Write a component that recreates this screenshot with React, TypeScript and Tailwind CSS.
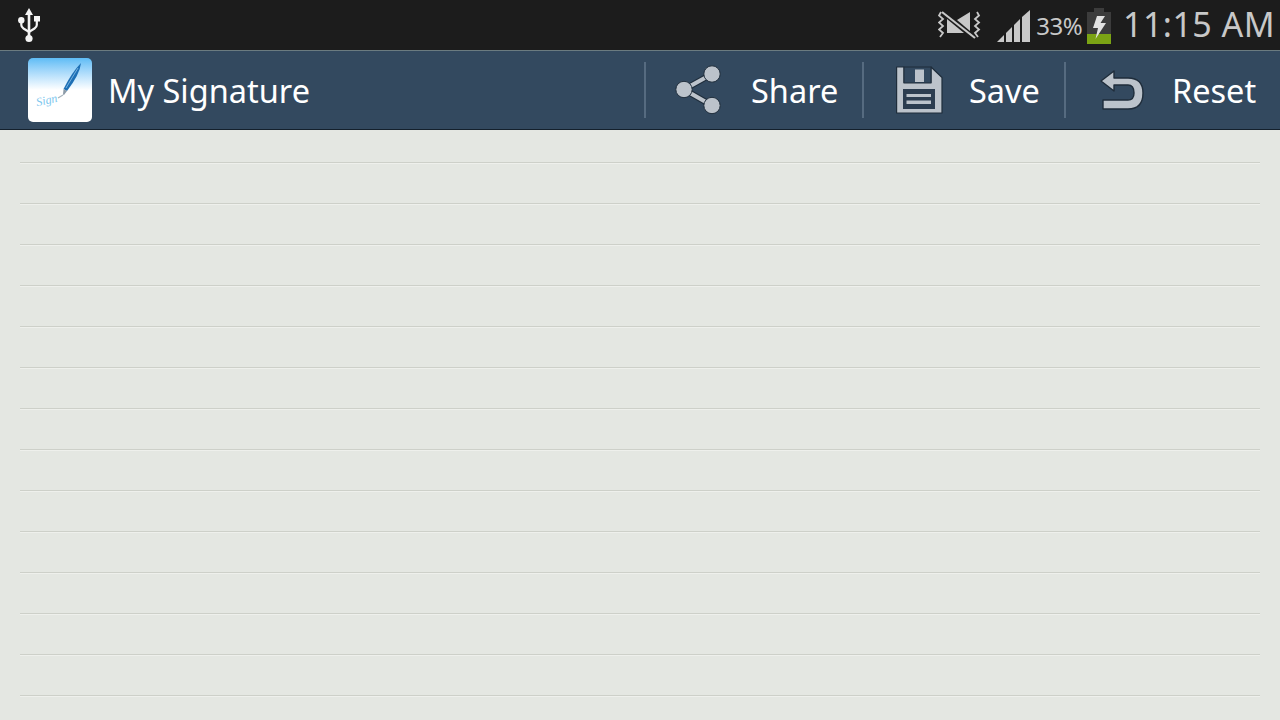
import React from "react";

const font = { fontFamily: '"Noto Sans", "Open Sans", sans-serif' };

function Usb() {
  return (
    <svg width="24" height="36" viewBox="0 0 24 36" className="block">
      <path d="M12 1 L16 8 H13.3 V32 H10.7 V8 H8 Z" fill="#f4f4f4" />
      <circle cx="12" cy="31.5" r="3.6" fill="#f4f4f4" />
      <circle cx="4.3" cy="13.2" r="3.2" fill="#f4f4f4" />
      <rect x="17" y="9" width="6" height="5.5" fill="#f4f4f4" />
      <path d="M4.3 14 V18 Q4.3 20 6.5 21.5 L12 25 L17.5 21.5 Q19.8 20 19.8 18 V13" fill="none" stroke="#f4f4f4" strokeWidth="2.2" />
    </svg>
  );
}

function NoSim() {
  return (
    <svg width="44" height="30" viewBox="0 0 44 30" className="block">
      <path d="M9 9 L26 23 H9 Z" fill="#c8c8c8" />
      <path d="M32 2 V21 L19 10 Z" fill="#c8c8c8" />
      <path d="M4 2 L37 28" stroke="#c8c8c8" strokeWidth="2.2" />
      <path d="M3 2 L1 5.5 L5 9 L1 12.5 L5 16 L1 19.5 L5 23 L2 27" fill="none" stroke="#c8c8c8" strokeWidth="1.8" />
      <path d="M39 2 L41 5.5 L37 9 L41 12.5 L37 16 L41 19.5 L37 23 L40 27" fill="none" stroke="#c8c8c8" strokeWidth="1.8" />
    </svg>
  );
}

function Signal() {
  return (
    <svg width="34" height="34" viewBox="0 0 34 34" className="block">
      <path d="M0 32 L7 25 V32 Z" fill="#c8c8c8" />
      <path d="M9 23 L15 17 V32 H9 Z" fill="#c8c8c8" />
      <path d="M17 15 L23 9 V32 H17 Z" fill="#c8c8c8" />
      <path d="M25 7 L33 0 V32 H25 Z" fill="#c8c8c8" />
    </svg>
  );
}

function Battery() {
  return (
    <svg width="24" height="36" viewBox="0 0 24 36" className="block">
      <rect x="7" y="0" width="10" height="4" fill="#3c3c3c" />
      <rect x="0" y="4" width="24" height="32" fill="#3c3c3c" />
      <rect x="0" y="26" width="24" height="10" fill="#7ba314" />
      <path d="M10 8 L6 20 H11 L8.5 31 L19 15 H13.5 L18 8 Z" fill="#e2e2e2" />
    </svg>
  );
}

function Logo() {
  return (
    <div className="relative w-[64px] h-[64px] rounded-[5px] overflow-hidden bg-gradient-to-b from-[#5dbcf5] via-[#ffffff] via-50% to-[#ffffff]">
      <svg width="64" height="64" viewBox="0 0 64 64" className="absolute inset-0">
        <path d="M53 5 Q52 16 39 33 L35.5 31 Q44 14 53 5 Z" fill="#1d6fb5" />
        <path d="M50 10 Q45 18 38 30" fill="none" stroke="#7fb8e2" strokeWidth="0.9" />
        <path d="M35.5 31 L39 33 L36 37 L35 36.5 Z" fill="#8c9ba8" />
        <path d="M30 40 L35 37" stroke="#a8b4bd" strokeWidth="1.2" />
      </svg>
      <span className="absolute left-[8px] top-[36px] text-[12px] leading-none italic text-[#7cc6ee] -rotate-12" style={{ fontFamily: '"Liberation Serif", serif' }}>Sign</span>
    </div>
  );
}

function Share() {
  return (
    <svg width="48" height="50" viewBox="0 0 48 50" className="block">
      <path d="M37 9 L9 24.5 L37 40.5" fill="none" stroke="#1f2d3b" strokeWidth="6.4" />
      <path d="M37 9 L9 24.5 L37 40.5" fill="none" stroke="#bcc3cb" strokeWidth="4.2" />
      <circle cx="37" cy="9" r="8.2" fill="#bcc3cb" stroke="#1f2d3b" strokeWidth="1" />
      <circle cx="9" cy="24.5" r="8.2" fill="#bcc3cb" stroke="#1f2d3b" strokeWidth="1" />
      <circle cx="37" cy="40.5" r="8.2" fill="#bcc3cb" stroke="#1f2d3b" strokeWidth="1" />
    </svg>
  );
}

function Save() {
  return (
    <svg width="48" height="48" viewBox="0 0 48 48" className="block">
      <path d="M0.6 1 H8 V16.5 H35 V1 L46 11.5 V47 H0.6 Z" fill="#bcc3cb" stroke="#1f2d3b" strokeWidth="1.2" strokeLinejoin="round" />
      <rect x="8" y="1" width="27" height="16" fill="#33495f" stroke="#1f2d3b" strokeWidth="1" />
      <rect x="19" y="3.5" width="9" height="12.5" fill="#bcc3cb" />
      <rect x="7" y="23" width="32" height="20" fill="#2c3d50" />
      <rect x="10.5" y="28" width="24.5" height="3" fill="#bcc3cb" />
      <rect x="10.5" y="34.5" width="24.5" height="3.5" fill="#bcc3cb" />
    </svg>
  );
}

function Reset() {
  return (
    <svg width="48" height="44" viewBox="0 0 48 44" className="block">
      <path d="M2 13 L15 3 V10 H29 Q44 10 44 25 Q44 41 29 41 H4 V32 H29 Q35 32 35 25 Q35 17 29 17 H15 V23 Z" fill="#bcc3cb" stroke="#1f2d3b" strokeWidth="1.4" strokeLinejoin="round" />
    </svg>
  );
}

function Divider() {
  return <div className="w-[2px] h-[56px] bg-[#566b80]" />;
}

export default function App() {
  const lines = Array.from({ length: 14 });
  return (
    <div className="w-[1280px] h-[720px] overflow-hidden flex flex-col bg-[#e4e7e2]" style={font}>
      <div className="h-[50px] shrink-0 bg-[#1c1c1c] flex items-center pl-[17px] pr-[5px]">
        <Usb />
        <div className="ml-auto flex items-center">
          <NoSim />
          <div className="ml-[15px] mt-[4px]"><Signal /></div>
          <span className="ml-[5px] mt-[2px] text-[24px] leading-none tracking-[-0.5px] text-[#c8c8c8]">33%</span>
          <div className="ml-[5px] mt-[1px]"><Battery /></div>
          <span className="ml-[12px] mb-[2px] text-[34px] leading-none tracking-[0.45px] text-[#c8c8c8]">11:15 AM</span>
        </div>
      </div>
      <div className="h-[80px] shrink-0 bg-[#33495f] border-t border-t-[#6b7b80] border-b border-b-[#14202c] flex items-center pl-[28px]">
        <Logo />
        <span className="ml-[16px] mt-[2px] text-[32.5px] leading-none text-white">My Signature</span>
        <div className="ml-auto flex items-center h-full">
          <Divider />
          <div className="w-[216px] flex items-center pl-[29px]">
            <Share />
            <span className="ml-[28px] mt-[2px] text-[32.5px] leading-none text-white">Share</span>
          </div>
          <Divider />
          <div className="w-[200px] flex items-center pl-[32px]">
            <Save />
            <span className="ml-[25px] mt-[2px] text-[32.5px] leading-none text-white">Save</span>
          </div>
          <Divider />
          <div className="w-[214px] flex items-center pl-[33px]">
            <Reset />
            <span className="ml-[25px] mt-[2px] text-[32.5px] leading-none text-white">Reset</span>
          </div>
        </div>
      </div>
      <div className="flex-1 pt-[32px] px-[20px]">
        {lines.map((_, i) => (
          <div key={i} className="h-[41px] border-t border-t-[#cdd0c9]">
            <div className="h-[1px] bg-[#eef0ec]" />
          </div>
        ))}
      </div>
    </div>
  );
}
